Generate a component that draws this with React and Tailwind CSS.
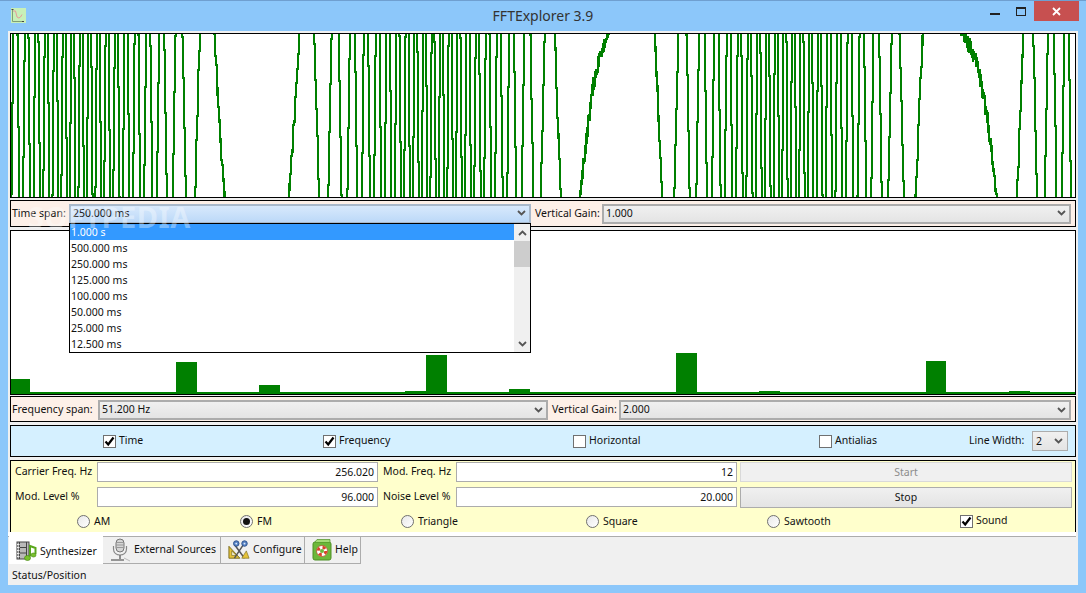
const PERIOD = 354.7
const CYCLES_PER_PX = 64 / 1064

// fm signal, clipped by the plot like the real trace
function buildWave() {
  const height = 163
  const points = []
  let seed = 12345
  let lastY = null
  const noise = () => {
    seed = (seed * 1103515245 + 12345) % 2147483648
    return seed / 2147483648 - 0.5
  }
  for (let s = 0; s <= 1064 * 3; s++) {
    const px = s / 3
    const phase =
      CYCLES_PER_PX * (px - 0.96 * (PERIOD / (2 * Math.PI)) * Math.sin((2 * Math.PI * (px - 246)) / PERIOD)) +
      0.755 -
      CYCLES_PER_PX * 246
    const value = Math.sin(2 * Math.PI * phase) + noise() * 0.1
    const y = Math.round(Math.max(-3, Math.min(height + 3, height / 2 - value * 2.1 * (height / 2))))
    const x = Math.round(px)
    // stair steps, the trace only moves in whole pixels
    if (lastY !== null) points.push(`${x},${lastY}`)
    points.push(`${x},${y}`)
    lastY = y
  }
  return points.join(' ')
}

const wavePoints = buildWave()

const bars = [
  { left: 0, width: 19, height: 15 },
  { left: 165, width: 21, height: 32 },
  { left: 248, width: 21, height: 9 },
  { left: 394, width: 21, height: 3 },
  { left: 415, width: 21, height: 39 },
  { left: 498, width: 21, height: 5 },
  { left: 665, width: 21, height: 41 },
  { left: 748, width: 21, height: 3 },
  { left: 915, width: 20, height: 33 },
  { left: 998, width: 21, height: 3 },
]

const timeOptions = ['1.000 s', '500.000 ms', '250.000 ms', '125.000 ms', '100.000 ms', '50.000 ms', '25.000 ms', '12.500 ms']

function Chevron({ up }) {
  return (
    <svg width="9" height="6" viewBox="0 0 9 6" className="shrink-0">
      <path d={up ? 'M1 5 L4.5 1.5 L8 5' : 'M1 1 L4.5 4.5 L8 1'} fill="none" stroke="#555" strokeWidth="1.8" />
    </svg>
  )
}

function Combo({ value, className, focused }) {
  return (
    <div
      className={`flex h-[20px] items-center justify-between border-2 pb-[1px] pl-[2px] pr-[3px] ${
        focused
          ? 'border-[#a9b9cb] bg-gradient-to-b from-[#d8e9fc] to-[#bcd9f8]'
          : 'border-[#acacac] bg-gradient-to-b from-[#f0f0f0] to-[#e4e4e4]'
      } ${className}`}
    >
      <span>{value}</span>
      <Chevron />
    </div>
  )
}

function Checkbox({ label, checked, className }) {
  return (
    <label className={`flex items-center gap-[3px] ${className}`}>
      <span className="flex h-[13px] w-[13px] items-center justify-center border border-[#707070] bg-white">
        {checked ? (
          <svg width="11" height="11" viewBox="0 0 11 11">
            <path d="M1.5 5.5 L4.2 8.5 L9.5 1.5" fill="none" stroke="#000" strokeWidth="2.2" />
          </svg>
        ) : null}
      </span>
      <span className="pb-[1px]">{label}</span>
    </label>
  )
}

function Radio({ label, checked, className }) {
  return (
    <label className={`flex items-center gap-[4px] ${className}`}>
      <span className="flex h-[13px] w-[13px] items-center justify-center rounded-full border border-[#707070] bg-gradient-to-br from-[#e8e8e8] to-white">
        {checked ? <span className="h-[7px] w-[7px] rounded-full bg-[#111]" /> : null}
      </span>
      {label}
    </label>
  )
}

function Field({ value, className }) {
  return (
    <div className={`flex h-[20px] items-center justify-end border border-[#acacac] bg-white pr-[3px] ${className}`}>
      {value}
    </div>
  )
}

function AppIcon() {
  return (
    <svg width="15" height="15" viewBox="0 0 15 15">
      <rect width="15" height="15" fill="#c8f0b8" />
      <path d="M1.5 1 V13.5 H13" fill="none" stroke="#7f9f78" strokeWidth="1" />
      <path d="M2 3 H4.5 L6 9 Q8 11 9.5 9 L11 6.5" fill="none" stroke="#e69a9a" strokeWidth="1" />
      <rect x="0.5" y="1" width="2" height="1" fill="#444" />
      <rect x="11" y="13" width="2" height="1" fill="#444" />
    </svg>
  )
}

function FilmIcon() {
  return (
    <svg width="21" height="21" viewBox="0 0 21 21">
      <rect x="1" y="1" width="12" height="17" fill="#b9b9b9" stroke="#444" />
      <path d="M3.5 1 V18 M10.5 1 V18 M3.5 6.5 H10.5 M3.5 12 H10.5" stroke="#444" strokeWidth="1" />
      <path d="M1 3.5 H3.5 M1 6.5 H3.5 M1 9.5 H3.5 M1 12.5 H3.5 M1 15.5 H3.5" stroke="#eee" strokeWidth="1" />
      <path d="M14 15.5 V5 L19.5 7 V13" fill="none" stroke="#5aa71c" strokeWidth="2" />
      <ellipse cx="11.5" cy="17" rx="3" ry="2.5" fill="#79c22c" stroke="#4a8a14" strokeWidth="0.7" />
      <ellipse cx="17.5" cy="14" rx="2.5" ry="2" fill="#79c22c" stroke="#4a8a14" strokeWidth="0.7" />
    </svg>
  )
}

function MicIcon() {
  return (
    <svg width="21" height="24" viewBox="0 0 21 24">
      <rect x="6" y="1" width="8" height="13" rx="4" fill="#d6d6d6" stroke="#777" />
      <path d="M6.5 4.5 H13.5 M6.5 7 H13.5 M6.5 9.500 H13.500" stroke="#8a8a8a" strokeWidth="0.8" />
      <path d="M3.500 8 V11 C3.500 19 16.500 19 16.500 11 V8" fill="none" stroke="#888" strokeWidth="1.2" />
      <path d="M10 17 V21 M1 22 H14" stroke="#777" strokeWidth="1.6" />
      <path d="M14 20 L20 23" stroke="#bbb" strokeWidth="1" />
    </svg>
  )
}

function ToolsIcon() {
  return (
    <svg width="22" height="21" viewBox="0 0 24 21">
      <path d="M1 20 V7 L13 20 Z" fill="#e6c33a" stroke="#7a6a1c" />
      <path d="M4 17 V12 L9 17 Z" fill="#f3f0d8" stroke="#7a6a1c" strokeWidth="0.7" />
      <path d="M7 5 L18 20 M17 5 L7 20" stroke="#555" strokeWidth="1.600" />
      <circle cx="9" cy="4" r="3" fill="#5b86c6" stroke="#2a4d88" />
      <circle cx="18" cy="4" r="3" fill="#5b86c6" stroke="#2a4d88" />
      <circle cx="9" cy="4" r="1" fill="#dfe9f6" />
      <circle cx="18" cy="4" r="1" fill="#dfe9f6" />
      <path d="M15 20 L20 12 L23 20 Z" fill="#e6c33a" stroke="#7a6a1c" strokeWidth="0.7" />
    </svg>
  )
}

function HelpIcon() {
  return (
    <svg width="20" height="22" viewBox="0 0 20 22">
      <rect x="1" y="3" width="18" height="18" rx="2" fill="#6cb83a" stroke="#4c8f24" />
      <path d="M3 3 L5 0.5 H18 V3" fill="#a5dc78" stroke="#4c8f24" strokeWidth="0.7" />
      <circle cx="10" cy="12" r="5.500" fill="#fff" stroke="#b8452c" strokeWidth="0.7" />
      <circle cx="10" cy="12" r="3.800" fill="none" stroke="#d8432a" strokeWidth="3" strokeDasharray="3 3" />
      <circle cx="10" cy="12" r="2" fill="#6cb83a" />
    </svg>
  )
}

function Tab({ icon, label, active, className }) {
  return (
    <div
      className={`flex items-center gap-[3px] pl-[7px] ${
        active
          ? 'relative -mt-[1px] h-[28px] bg-white pt-[3px]'
          : 'h-[27px] border-r border-b border-[#acacac] bg-[#f0f0f0] pb-[1px]'
      } ${className}`}
    >
      {icon}
      <span>{label}</span>
    </div>
  )
}

export default function App() {
  return (
    <div
      className="flex h-[593px] w-[1086px] flex-col overflow-hidden border-t border-[#6f9fd0] bg-[#8cc7fa] text-[10.5px] leading-none text-[#111]"
      style={{ fontFamily: '"Noto Sans", sans-serif' }}
    >
      <div className="relative flex h-[30px] shrink-0 items-center justify-center">
        <div className="absolute left-[11px] top-[7px]">
          <AppIcon />
        </div>
        <span className="text-[14px] text-[#333]">FFTExplorer 3.9</span>
        <div className="absolute right-[7px] top-0 flex items-start">
          <div className="mr-[16px] mt-[12px] h-[2px] w-[10px] bg-[#222]" />
          <div className="mr-[8px] mt-[6px] h-[9px] w-[10px] border border-t-2 border-[#222]" />
          <div className="flex h-[20px] w-[45px] items-center justify-center bg-[#c75050]">
            <svg width="9" height="9" viewBox="0 0 9 9">
              <path d="M1 1 L8 8 M8 1 L1 8" stroke="#fff" strokeWidth="1.800" />
            </svg>
          </div>
        </div>
      </div>

      <div className="ml-[8px] mr-[8px] flex h-[554px] w-[1070px] flex-col bg-[#f0f0f0]">
        <div className="relative flex flex-col px-[2px] pt-[2px]">
          <div className="h-[165px] w-[1066px] overflow-hidden border border-black bg-white">
            <svg width="1064" height="163" viewBox="0 0 1064 163" shapeRendering="crispEdges" className="block">
              <polyline points={wavePoints} fill="none" stroke="#008000" strokeWidth="2" />
            </svg>
          </div>

          <div className="mt-[2px] flex h-[27px] w-[1066px] items-center border border-black bg-[#fdf0e8] pl-[1px]">
            <span className="w-[57px] pb-[1px]">Time span:</span>
            <Combo value="250.000 ms" focused className="w-[462px]" />
            <span className="ml-[4px] w-[67px] pb-[1px]">Vertical Gain:</span>
            <Combo value="1.000" className="w-[469px]" />
          </div>

          <div className="relative mt-[3px] h-[165px] w-[1066px] border border-black bg-white">
            <div className="absolute bottom-0 left-0 h-[2px] w-full bg-[#008000]" />
            {bars.map((bar) => (
              <div
                key={bar.left}
                className="absolute bottom-0 bg-[#008000]"
                style={{ left: bar.left, width: bar.width, height: bar.height }}
              />
            ))}
          </div>

          {/* opened list of the time span combo */}
          <div className="absolute left-[61px] top-[192px] flex h-[130px] w-[462px] border border-black bg-white">
            <div className="flex-1">
              {timeOptions.map((option, index) => (
                <div
                  key={option}
                  className={`flex h-[16px] items-center pl-[1px] ${index === 0 ? 'bg-[#3399ff] text-white' : 'text-[#111]'}`}
                >
                  {option}
                </div>
              ))}
            </div>
            <div className="flex w-[16px] flex-col items-center bg-[#f0f0f0]">
              <div className="flex h-[17px] items-center">
                <Chevron up />
              </div>
              <div className="h-[26px] w-full bg-[#cdcdcd]" />
              <div className="flex-1" />
              <div className="flex h-[17px] items-center">
                <Chevron />
              </div>
            </div>
          </div>

          <div className="pointer-events-none absolute left-[20px] top-[171px] text-[29px] font-bold tracking-[0.5px] text-white/35">
            SOFTPEDIA
          </div>

          <div className="mt-[1px] flex h-[26px] w-[1066px] items-center border border-black bg-[#fdf0e8] pl-[1px] pt-[2px]">
            <span className="w-[86px] pb-[1px]">Frequency span:</span>
            <Combo value="51.200 Hz" className="w-[450px]" />
            <span className="ml-[4px] w-[67px] pb-[1px]">Vertical Gain:</span>
            <Combo value="2.000" className="w-[452px]" />
          </div>

          <div className="mt-[3px] flex h-[32px] w-[1066px] items-center border border-black bg-[#d5f0ff]">
            <Checkbox label="Time" checked className="ml-[92px] w-[220px]" />
            <Checkbox label="Frequency" checked className="w-[250px]" />
            <Checkbox label="Horizontal" className="w-[246px]" />
            <Checkbox label="Antialias" className="w-[150px]" />
            <span className="w-[63px] pb-[1px]">Line Width:</span>
            <div className="flex h-[20px] w-[36px] items-center justify-between border border-[#acacac] bg-gradient-to-b from-[#f0f0f0] to-[#e4e4e4] pl-[3px] pr-[4px]">
              <span>2</span>
              <Chevron />
            </div>
          </div>

          <div className="mt-[3px] flex h-[72px] w-[1066px] flex-col border border-b-0 border-black bg-[#ffffcc] pl-[4px] pr-[3px] pt-[1px]">
            <div className="flex h-[20px] items-center">
              <span className="w-[82px] pb-[1px]">Carrier Freq. Hz</span>
              <Field value="256.020" className="w-[281px]" />
              <span className="w-[78px] pb-[1px] pl-[5px]">Mod. Freq. Hz</span>
              <Field value="12" className="w-[281px]" />
              <div className="ml-[3px] flex h-[20px] flex-1 items-center justify-center border border-[#d9d9d9] bg-[#f0f0f0] text-[#8c8c8c]">
                Start
              </div>
            </div>
            <div className="mt-[5px] flex h-[20px] items-center">
              <span className="w-[82px] pb-[1px]">Mod. Level %</span>
              <Field value="96.000" className="w-[281px]" />
              <span className="w-[78px] pb-[1px] pl-[5px]">Noise Level %</span>
              <Field value="20.000" className="w-[281px]" />
              <div className="ml-[3px] flex h-[21px] flex-1 items-center justify-center border border-[#acacac] bg-gradient-to-b from-[#f0f0f0] to-[#e4e4e4]">
                Stop
              </div>
            </div>
            <div className="flex flex-1 items-center pt-[3px]">
              <Radio label="AM" className="ml-[62px] w-[163px]" />
              <Radio label="FM" checked className="w-[161px]" />
              <Radio label="Triangle" className="w-[185px]" />
              <Radio label="Square" className="w-[181px]" />
              <Radio label="Sawtooth" className="w-[193px]" />
              <Checkbox label="Sound" checked />
            </div>
          </div>
          <div className="h-[4px] w-[1068px] -ml-[2px] bg-white" />
        </div>

        <div className="w-[1068px] border-t border-[#acacac]">
          <div className="flex pl-[1px]">
            <Tab icon={<FilmIcon />} label="Synthesizer" active className="w-[94px]" />
            <Tab icon={<MicIcon />} label="External Sources" className="w-[118px]" />
            <Tab icon={<ToolsIcon />} label="Configure" className="w-[84px]" />
            <Tab icon={<HelpIcon />} label="Help" className="w-[56px]" />
          </div>
          <div className="pl-[4px] pt-[6px]">Status/Position</div>
        </div>
      </div>
    </div>
  )
}
